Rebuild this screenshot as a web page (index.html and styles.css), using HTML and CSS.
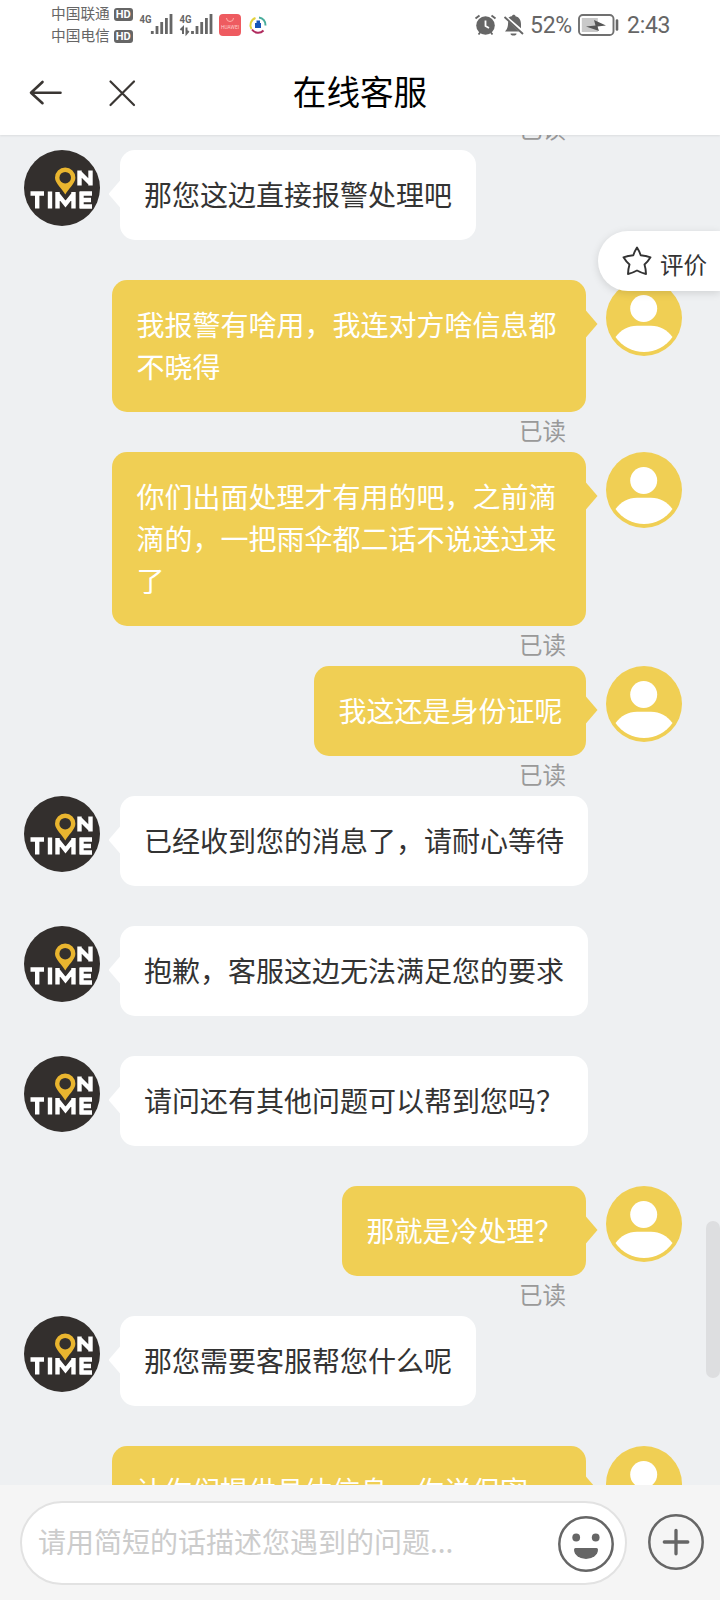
FILE: index.html
```html
<!DOCTYPE html>
<html lang="zh-CN">
<head>
<meta charset="utf-8">
<title>在线客服</title>
<link rel="stylesheet" href="styles.css">
</head>
<body>
<svg width="0" height="0" class="defs">
  <symbol id="agent" viewBox="0 0 76 76">
    <circle cx="38" cy="38" r="38" fill="#332f2d"/>
    <g fill="none" stroke="#fff" stroke-width="4.400">
      <path d="M55.500 35.500V20.500M66.500 35.500V20.500M55 22L67 34"/>
      <path d="M6.500 43.500H20M13.200 43.500V58.500M26 41.500V58.500M33.500 58.500V42M49.500 58.500V42M33.500 44L41.500 54L49.500 44M57.500 41.500V58.500M56 43.500H68M56 50H67M56 56.500H68"/>
    </g>
    <path d="M41.300 44.500C39 39.500 31 33.500 31 27.700a10.200 10.200 0 0 1 20.400 0C51.400 33.500 43.600 39.500 41.300 44.500z" fill="#e9b52f"/>
    <circle cx="41.200" cy="27.700" r="5.800" fill="#332f2d"/>
  </symbol>
  <symbol id="user" viewBox="0 0 76 76">
    <circle cx="38" cy="38" r="38" fill="#f0cf54"/>
    <circle cx="37.700" cy="28.500" r="13.500" fill="#fff"/>
    <path d="M9.500 57C15 50 22 45.800 31 45.800H45C54 45.800 61 50 66.500 57A34.500 34.500 0 0 1 9.500 57z" fill="#fff"/>
  </symbol>
</svg>
<div class="screen">
  <header class="top">
    <div class="status">
      <div class="carriers">
        <div class="carrier">中国联通<span class="hd">HD</span></div>
        <div class="carrier">中国电信<span class="hd">HD</span></div>
      </div>
      <svg class="signals" width="130" height="30" viewBox="138 10 130 30">
        <g class="net"><text x="139.500" y="22.500" textLength="12" lengthAdjust="spacingAndGlyphs">4G</text><text x="179.500" y="22.500" textLength="12" lengthAdjust="spacingAndGlyphs">4G</text></g>
        <path d="M152.300 34v-3M157 34v-8M161.700 34v-12M166.400 34v-16M171 34v-20M192.500 34v-3M197 34v-8M201.700 34v-12M206.400 34v-16M211 34v-20" stroke="#666" stroke-width="2.800"/>
        <path d="M183 34v-6.500l-2.500 2.500M186.500 27.500v6l2.200-2.500" stroke="#666" stroke-width="2" fill="none"/>
        <rect x="219" y="14" width="22" height="22" rx="4" fill="#ee5b60"/>
        <path d="M226.500 18a3.500 3.500 0 0 0 7 0" stroke="#ffb0a8" fill="none"/>
        <text x="221" y="28.500" class="brand" textLength="18" lengthAdjust="spacingAndGlyphs">HUAWEI</text>
        <g fill="none" stroke-width="2">
          <path d="M259 17.500a7.500 7.500 0 0 1 6.500 8" stroke="#49ad9c"/>
          <path d="M255.500 18a7.500 7.500 0 0 0-4 11" stroke="#e3d23c"/>
          <path d="M252 29.500a7.500 7.500 0 0 0 11.500 1" stroke="#b02b5e"/>
        </g>
        <path d="M256.500 20.500h3.500v2.500h1v5h-6v-5h1.500z" fill="#1856b8"/>
      </svg>
      <div class="right">
        <svg width="51" height="24" viewBox="474 13 51 24">
          <g fill="#666">
            <circle cx="485.500" cy="25.500" r="9.300"/>
            <path d="M505 31.500c3-3 3-6 3.200-10.500L519 31.500z"/>
            <path d="M508.500 17.500c1.500-1 2.500-1.300 3.500-1.300 0-2 3.500-2 3.500 0 4 1 5.500 4 5.500 8v4z"/>
            <path d="M510.500 33.500h6a3 2 0 0 1-6 0z"/>
          </g>
          <path d="M475.500 18.500l4-3M495.500 18.500l-4-3M478.500 34.500l2-2.500M492.500 34.500l-2-2.500M504.500 17l18.500 17" stroke="#666" stroke-width="1.900"/>
          <path d="M485.500 20.500v5.500l3.500 2" stroke="#fff" stroke-width="1.800" fill="none"/>
        </svg>
        <span class="pct">52%</span>
        <svg class="battery" width="41" height="22" viewBox="0 0 41 22">
          <rect x="1" y="1" width="34.500" height="20" rx="3.800" fill="#fff" stroke="#707070" stroke-width="1.900"/>
          <rect x="3.800" y="4" width="16" height="14" fill="#c9c9c9"/>
          <path d="M8 12.500l9.500-1L16 6l12 5.500-8.500 1L21 17z" fill="#555"/>
          <path d="M39 6.500v9" stroke="#666" stroke-width="2.600" stroke-linecap="round"/>
        </svg>
        <span class="time">2:43</span>
      </div>
    </div>
    <div class="nav">
      <svg width="110" height="40" viewBox="28 73 110 40" fill="none" stroke="#3a3633" stroke-width="2.600" stroke-linecap="round" stroke-linejoin="round">
        <path d="M60.500 92.700H31.500M42.500 82L31 92.700l11.500 10.500"/>
        <path d="M110.500 81.500l23.500 23.500M134 81.500L110.500 105" stroke-width="2.200"/>
      </svg>
      <h1 class="title">在线客服</h1>
    </div>
  </header>

  <main class="chat">
    <div class="read lead">已读</div>
    <div class="row"><svg class="avatar"><use href="#agent"/></svg><div class="bubble">那您这边直接报警处理吧</div></div>
    <div class="row me"><div class="bubble">我报警有啥用，我连对方啥信息都不晓得</div><svg class="avatar"><use href="#user"/></svg></div>
    <div class="read">已读</div>
    <div class="row me"><div class="bubble">你们出面处理才有用的吧，之前滴滴的，一把雨伞都二话不说送过来了</div><svg class="avatar"><use href="#user"/></svg></div>
    <div class="read">已读</div>
    <div class="row me"><div class="bubble">我这还是身份证呢</div><svg class="avatar"><use href="#user"/></svg></div>
    <div class="read">已读</div>
    <div class="row"><svg class="avatar"><use href="#agent"/></svg><div class="bubble">已经收到您的消息了，请耐心等待</div></div>
    <div class="row"><svg class="avatar"><use href="#agent"/></svg><div class="bubble">抱歉，客服这边无法满足您的要求</div></div>
    <div class="row"><svg class="avatar"><use href="#agent"/></svg><div class="bubble">请问还有其他问题可以帮到您吗？</div></div>
    <div class="row me"><div class="bubble">那就是冷处理？</div><svg class="avatar"><use href="#user"/></svg></div>
    <div class="read">已读</div>
    <div class="row"><svg class="avatar"><use href="#agent"/></svg><div class="bubble">那您需要客服帮您什么呢</div></div>
    <div class="row me"><div class="bubble full">让你们提供具体信息，你说保密</div><svg class="avatar"><use href="#user"/></svg></div>
    <div class="rate">
      <svg width="32" height="32" viewBox="0 0 32 32"><path d="M16 2.500Q18.300 6 19.700 10.300Q25 10.800 29.500 12.300Q27 16.500 23.500 19.500Q25 24.500 25 29Q20.500 28 16 25.500Q11.500 28 7 29Q7 24.500 8.500 19.500Q5 16.500 2.500 12.300Q7 10.800 12.300 10.300Q13.700 6 16 2.500z" fill="none" stroke="#333" stroke-width="1.900" stroke-linejoin="round"/></svg>
      <span>评价</span>
    </div>
    <div class="scrollbar"></div>
  </main>

  <footer class="composer">
    <div class="field">
      <span class="placeholder">请用简短的话描述您遇到的问题...</span>
      <svg width="58" height="58" viewBox="0 0 58 58">
        <circle cx="29" cy="29" r="26.700" fill="none" stroke="#666" stroke-width="2.500"/>
        <circle cx="19.200" cy="22.500" r="3.900" fill="#666"/><circle cx="38.700" cy="22.500" r="3.900" fill="#666"/>
        <path d="M18.500 33h21q1.500 0 1.500 1.500a12 9.500 0 0 1-24 0q0-1.500 1.500-1.500z" fill="#666"/>
      </svg>
    </div>
    <svg class="plus" width="58" height="58" viewBox="0 0 58 58" fill="none" stroke="#666">
      <circle cx="29" cy="29" r="26.700" stroke-width="2.500"/>
      <path d="M17.300 29h23.500M29 17.300v23.500" stroke-width="3.300" stroke-linecap="round"/>
    </svg>
  </footer>
</div>
</body>
</html>
```
FILE: styles.css
```css
* { box-sizing: border-box; }
body {
  margin: 0;
  font-family: "Noto Sans CJK SC", sans-serif;
  color: #333;
}
.defs { position: absolute; }
.screen {
  width: 720px;
  height: 1600px;
  display: flex;
  flex-direction: column;
  overflow: hidden;
  background: #eef0f2;
}
.top {
  height: 135px;
  flex: none;
  background: #fff;
  box-shadow: 0 1px 2px rgba(0, 0, 0, .08);
  z-index: 1;
}
.status {
  height: 50px;
  display: flex;
  align-items: flex-start;
  padding-left: 51px;
  color: #666;
}
.carriers { width: 87px; padding-top: 2px; }
.carrier {
  height: 22px;
  display: flex;
  align-items: center;
  gap: 4px;
  font-size: 14.700px;
  line-height: 22px;
  white-space: nowrap;
}
.hd {
  width: 19px;
  height: 13px;
  margin-top: 2px;
  border-radius: 3px;
  background: #666;
  color: #fff;
  font: bold 11px/13px Roboto, sans-serif;
  text-align: center;
}
.signals { margin-top: 10px; }
.net { font: bold 11.500px Roboto, sans-serif; fill: #666; }
.brand { font: 5px Roboto, sans-serif; fill: #ffd0cc; }
.right {
  height: 24px;
  margin: 13px 49px 0 auto;
  display: flex;
  align-items: center;
}
.pct, .time { font-family: Roboto, sans-serif; font-size: 23px; line-height: 24px; padding-top: 2px; white-space: nowrap; letter-spacing: -.3px; }
.pct { width: 43px; margin-left: 5px; }
.battery { margin-left: 5px; }
.time { width: 44px; margin-left: 8px; }
.nav {
  height: 85px;
  display: grid;
  grid-template-columns: 110px 1fr 110px;
  align-items: center;
  padding: 0 28px;
}
.title {
  margin: 0;
  padding-bottom: 4px;
  text-align: center;
  color: #000;
  font-size: 33.600px;
  font-weight: 400;
  line-height: 50px;
}
.chat {
  height: 1350px;
  flex: none;
  position: relative;
  overflow: hidden;
}
.lead { margin-top: -25px; }
.row {
  display: flex;
  align-items: flex-start;
  gap: 20px;
  padding: 0 38px 0 24px;
  margin-bottom: 40px;
}
.me { justify-content: flex-end; }
.me:has(+ .read) { margin-bottom: 0; }
.avatar { width: 76px; height: 76px; flex: none; }
.bubble {
  position: relative;
  max-width: 474px;
  padding: 22.500px 24px 25.500px;
  border-radius: 15px;
  background: #fff;
  font-size: 28px;
  line-height: 42px;
}
.bubble.full { width: 474px; }
.me .bubble { background: #f0cf54; color: #fff; }
.me .bubble:not(.full) { padding-left: 24.500px; padding-right: 23.500px; }
.bubble::before {
  content: "";
  position: absolute;
  top: 30px;
  left: -11.500px;
  width: 12px;
  height: 28px;
  background: inherit;
  clip-path: polygon(0 50%, 100% 0, 100% 100%);
}
.me .bubble::before {
  left: auto;
  right: -11.500px;
  clip-path: polygon(0 0, 100% 50%, 0 100%);
}
.read {
  height: 40px;
  padding-right: 154px;
  text-align: right;
  color: #999;
  font-size: 23.500px;
  line-height: 37px;
}
.rate {
  position: absolute;
  top: 96px;
  right: 0;
  width: 122px;
  height: 60px;
  display: flex;
  align-items: center;
  gap: 7px;
  padding-left: 23px;
  border-radius: 30px 0 0 30px;
  background: #fff;
  box-shadow: 0 2px 8px rgba(0, 0, 0, .13);
  font-size: 23.500px;
  line-height: 30px;
}
.rate span { padding-top: 5px; }
.scrollbar {
  position: absolute;
  top: 1086px;
  right: 0;
  width: 14px;
  height: 157px;
  border-radius: 7px;
  background: #dddee0;
}
.composer {
  height: 115px;
  flex: none;
  display: flex;
  align-items: flex-start;
  gap: 20px;
  padding: 16px 0 0 20px;
  background: #f5f5f5;
}
.field {
  width: 607px;
  height: 84px;
  display: flex;
  align-items: center;
  justify-content: space-between;
  padding: 2px 10px 0 16px;
  border: 2px solid #e2e2e2;
  border-radius: 42px;
  background: #fff;
}
.placeholder { color: #ccc; font-size: 28px; line-height: 40px; padding-bottom: 7px; }
.plus { margin-top: 12px; }
```
